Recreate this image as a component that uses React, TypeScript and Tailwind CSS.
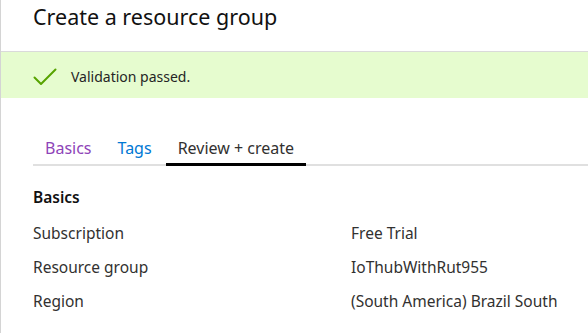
import React from "react";

const rows = [
  { label: "Subscription", value: "Free Trial" },
  { label: "Resource group", value: "IoThubWithRut955" },
  { label: "Region", value: "(South America) Brazil South" },
];

const tabs = [
  { name: "Basics", cls: "text-[#8e44b8]" },
  { name: "Tags", cls: "text-[#0078d4]" },
  { name: "Review + create", cls: "text-[#323130] border-b-[3px] border-black" },
];

export default function App() {
  return (
    <div className="w-[588px] h-[333px] overflow-hidden bg-white border-l border-[#d4d4d4] font-['Noto_Sans',sans-serif] text-[#323130]">
      {/* header */}
      <div className="h-[52px] pl-[32px] pt-[2px] border-b border-[#dadada]">
        <h1 className="text-[21.5px] leading-[30px] text-[#111]">Create a resource group</h1>
      </div>

      {/* validation banner */}
      <div className="h-[46px] bg-[#e6fccf] flex items-center pl-[32px] pt-[3px]">
        <svg width="24" height="18" viewBox="0 0 24 18" fill="none">
          <path d="M1.5 9.5L8 16L22.5 1.5" stroke="#57a300" strokeWidth="2" strokeLinecap="round" strokeLinejoin="round" />
        </svg>
        <span className="ml-[14px] text-[14px] text-[#252525]">Validation passed.</span>
      </div>

      {/* tabs */}
      <div className="ml-[32px] mt-[38px] flex gap-[2px] border-b-2 border-[#e0e0e0]">
        {tabs.map((t) => (
          <div key={t.name} className={`px-[12px] h-[30px] -mb-[2px] text-[16px] leading-[24px] ${t.cls}`}>
            {t.name}
          </div>
        ))}
      </div>

      {/* summary */}
      <div className="pl-[32px] pt-[20px]">
        <h2 className="text-[15.5px] font-semibold text-[#111] leading-[22px]">Basics</h2>
        <div className="mt-[14px] flex flex-col gap-[12px]">
          {rows.map((r) => (
            <div key={r.label} className="flex text-[15.5px] leading-[22px]">
              <div className="w-[318px]">{r.label}</div>
              <div>{r.value}</div>
            </div>
          ))}
        </div>
      </div>
    </div>
  );
}
